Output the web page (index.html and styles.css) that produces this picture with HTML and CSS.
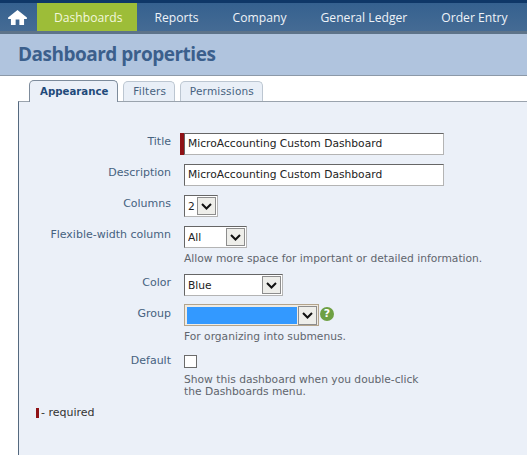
FILE: index.html
```html
<!DOCTYPE html>
<html>
<head>
	<title>Dashboard properties</title>
	<link rel="stylesheet" href="styles.css">
</head>
<body>
<div class="nav">
	<a class="home" href="#"><svg width="19" height="15" viewBox="0 0 20 16"><path d="M10 0 L20 8 L20 9.5 L17 9.5 L17 16 L12 16 L12 10 L8 10 L8 16 L3 16 L3 9.5 L0 9.5 L0 8 Z" fill="#fff"/></svg></a>
	<a class="item active" href="#">Dashboards</a>
	<a class="item" href="#">Reports</a>
	<a class="item" href="#">Company</a>
	<a class="item" href="#">General Ledger</a>
	<a class="item" href="#">Order Entry</a>
</div>
<div class="pagehead"><h1>Dashboard properties</h1></div>
<div class="tabs">
	<a class="tab current" href="#">Appearance</a>
	<a class="tab" href="#">Filters</a>
	<a class="tab" href="#">Permissions</a>
</div>
<form class="panel" action=".">
	<div class="row">
		<label>Title</label>
		<div class="field"><span class="reqbar"></span><input class="txt" type="text" value="MicroAccounting Custom Dashboard"></div>
	</div>
	<div class="row">
		<label>Description</label>
		<div class="field"><input class="txt" type="text" value="MicroAccounting Custom Dashboard"></div>
	</div>
	<div class="row">
		<label>Columns</label>
		<div class="field">
			<div class="sel sel-columns"><select><option>2</option></select><span class="arrow"><svg width="11" height="7" viewBox="0 0 11 7"><path d="M1 1 L5.5 5.5 L10 1" fill="none" stroke="#111" stroke-width="2"/></svg></span></div>
		</div>
	</div>
	<div class="row">
		<label>Flexible-width column</label>
		<div class="field">
			<div class="sel sel-flex"><select><option>All</option></select><span class="arrow"><svg width="11" height="7" viewBox="0 0 11 7"><path d="M1 1 L5.5 5.5 L10 1" fill="none" stroke="#111" stroke-width="2"/></svg></span></div>
			<p class="hint">Allow more space for important or detailed information.</p>
		</div>
	</div>
	<div class="row row-color">
		<label>Color</label>
		<div class="field">
			<div class="sel sel-color"><select><option>Blue</option></select><span class="arrow"><svg width="11" height="7" viewBox="0 0 11 7"><path d="M1 1 L5.5 5.5 L10 1" fill="none" stroke="#111" stroke-width="2"/></svg></span></div>
		</div>
	</div>
	<div class="row row-group">
		<label>Group</label>
		<div class="field">
			<div class="groupline">
				<div class="sel sel-group"><select><option></option></select><span class="arrow"><svg width="11" height="7" viewBox="0 0 11 7"><path d="M1 1 L5.5 5.5 L10 1" fill="none" stroke="#111" stroke-width="2"/></svg></span></div>
				<span class="help">?</span>
			</div>
			<p class="hint">For organizing into submenus.</p>
		</div>
	</div>
	<div class="row row-default">
		<label>Default</label>
		<div class="field">
			<input class="chk" type="checkbox">
			<p class="hint hint-chk">Show this dashboard when you double-click<br>the Dashboards menu.</p>
		</div>
	</div>
	<p class="legend"><span class="reqmark"></span>- required</p>
</form>
</body>
</html>
```

FILE: styles.css
```css
html, body {
	margin: 0;
	padding: 0;
	height: 100%;
	overflow: hidden;
}
body {
	display: flex;
	flex-direction: column;
	background: #fff;
	font-family: "DejaVu Sans", sans-serif;
	font-size: 11px;
}
a {
	text-decoration: none;
}

.nav {
	display: flex;
	height: 28px;
	border-top: 3px solid #0e3767;
	border-bottom: 3px solid #5d7389;
	background: linear-gradient(#35618f, #456b94);
	font-family: "Open Sans", sans-serif;
	font-size: 12.15px;
	line-height: 30px;
}
.home {
	display: flex;
	align-items: center;
	width: 37px;
	padding-left: 8px;
	box-sizing: border-box;
}
.item {
	padding: 0 17px;
	color: #eef3f8;
}
.item.active {
	padding-right: 15px;
	background: #9dbd38;
	color: #f2f7dc;
}

.pagehead {
	height: 41px;
	background: #b0c4de;
	border-bottom: 1px solid #8c99a8;
}
.pagehead h1 {
	margin: 0;
	padding-left: 18px;
	font-family: "Open Sans", sans-serif;
	font-size: 19px;
	font-weight: bold;
	line-height: 41px;
	letter-spacing: -0.5px;
	color: #3b5f8c;
}

.tabs {
	display: flex;
	align-items: flex-end;
	gap: 5px;
	height: 25px;
	padding-left: 29px;
}
.tab {
	height: 19px;
	padding: 0 7.5px 0 9px;
	border: 1px solid #bcc6d1;
	border-bottom: 0;
	border-radius: 5px 5px 0 0;
	background: #e9eff7;
	color: #46627f;
	font-size: 10.5px;
	line-height: 18px;
	letter-spacing: 0.2px;
}
.tab.current {
	position: relative;
	height: 21px;
	margin-bottom: -1px;
	padding: 0 9px 0 10px;
	border-color: #7d8b9b;
	background: #ebf0f8;
	color: #1f4a7a;
	font-size: 10.2px;
	font-weight: bold;
	line-height: 22px;
	letter-spacing: 0;
}

.panel {
	flex: 1;
	margin: 0 0 0 18px;
	padding-top: 31px;
	border-top: 1px solid #9aa3ad;
	border-left: 1px solid #55697f;
	background: #ebf0f8;
}
.row {
	display: flex;
	margin-bottom: 9px;
}
.row-color {
	margin-bottom: 8px;
}
.row-group {
	margin-bottom: 10px;
}
.row label {
	width: 152px;
	margin-right: 13px;
	color: #46627f;
	text-align: right;
	line-height: 18px;
}
.row-group label {
	padding-top: 1px;
}
.row-default label {
	line-height: 16px;
}
.field {
	position: relative;
}

.txt {
	display: block;
	box-sizing: border-box;
	width: 260px;
	height: 22px;
	margin: 0;
	padding: 0 3px 2px;
	border: 1px solid #b4b4b4;
	border-top-color: #666;
	border-left-color: #666;
	background: #fff;
	color: #222;
	font: 10.7px "DejaVu Sans", sans-serif;
	outline: 0;
}
.reqbar {
	position: absolute;
	left: -4px;
	top: 0;
	width: 4px;
	height: 22px;
	background: #8f1216;
}

.sel {
	position: relative;
	box-sizing: border-box;
	height: 22px;
	border: 1px solid #b4b4b4;
	border-top-color: #666;
	border-left-color: #666;
	background: #fff;
}
.sel select {
	display: block;
	width: 100%;
	height: 20px;
	padding: 0 3px;
	border: 0;
	background: transparent;
	color: #222;
	font: 10.7px "DejaVu Sans", sans-serif;
	appearance: none;
	outline: 0;
}
.arrow {
	position: absolute;
	right: 1px;
	top: 1px;
	display: flex;
	align-items: center;
	justify-content: center;
	box-sizing: border-box;
	width: 19px;
	height: 18px;
	border: 1px solid #8d8d8d;
	background: #eeeeea;
	pointer-events: none;
}
.sel-columns {
	width: 34px;
}
.sel-flex {
	width: 63px;
}
.sel-color {
	width: 99px;
}
.sel-group {
	width: 135px;
	padding: 2px;
	border: 1px solid #b3a48c;
	background: #f0ebe2;
}
.sel-group select {
	width: 110px;
	height: 17px;
	padding: 0;
	background: #3399ff;
}
.sel-group .arrow {
	height: 19px;
}
.groupline {
	display: flex;
	align-items: flex-start;
}
.help {
	width: 14px;
	height: 14px;
	margin: 3px 0 0 1px;
	border-radius: 50%;
	background: #6ea043;
	color: #fff;
	font-size: 11px;
	font-weight: bold;
	line-height: 14px;
	text-align: center;
}

.hint {
	margin: 5px 0 0;
	color: #5f656d;
	font-size: 10.7px;
	line-height: 12px;
}
.hint-chk {
	margin-top: 6px;
}
.chk {
	display: block;
	box-sizing: border-box;
	width: 13px;
	height: 13px;
	margin: 2px 0 0;
	border: 1px solid #6b6b6b;
	background: #fff;
	appearance: none;
}

.legend {
	display: flex;
	align-items: center;
	margin: 2px 0 0 17px;
	color: #333;
	line-height: 12px;
}
.reqmark {
	width: 3px;
	height: 10px;
	margin-right: 2px;
	background: #8f1216;
}
```
